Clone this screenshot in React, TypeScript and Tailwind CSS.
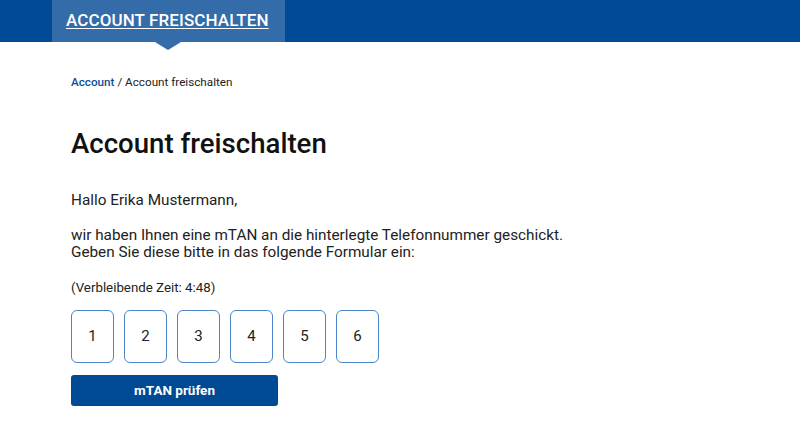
export default function App() {
  const digits = ["1", "2", "3", "4", "5", "6"];

  return (
    <div className="w-[800px] h-[447px] bg-white font-['Roboto',sans-serif] text-[#222] overflow-hidden">
      {/* Top bar with active tab */}
      <header className="h-[42px] bg-[#004a97] flex">
        <div className="relative ml-[52px] w-[233px] h-full bg-[#336ca9] flex items-center pl-[14px]">
          <a href="#" className="text-white text-[17px] font-medium underline underline-offset-2 tracking-[0.1px]">
            ACCOUNT FREISCHALTEN
          </a>
          <span className="absolute left-[103px] top-full w-0 h-0 border-l-[13px] border-r-[13px] border-t-[8px] border-l-transparent border-r-transparent border-t-[#336ca9]" />
        </div>
      </header>

      <main className="px-[71px]">
        <nav className="mt-[32px] text-[11.7px] leading-[16px]">
          <a href="#" className="text-[#0b4f9c] font-medium">Account</a>
          <span> / Account freischalten</span>
        </nav>

        <h1 className="mt-[38px] text-[27.6px] leading-[32px] font-medium text-[#111]">
          Account freischalten
        </h1>

        <p className="mt-[31px] text-[15.3px] leading-[18px]">Hallo Erika Mustermann,</p>

        <p className="mt-[18px] text-[15.3px] leading-[17px]">
          wir haben Ihnen eine mTAN an die hinterlegte Telefonnummer geschickt.
          <br />
          Geben Sie diese bitte in das folgende Formular ein:
        </p>

        <p className="mt-[19px] text-[13.3px] leading-[16px]">(Verbleibende Zeit: 4:48)</p>

        <div className="mt-[14px] flex gap-[10px]">
          {digits.map((d) => (
            <div
              key={d}
              className="w-[43px] h-[53px] rounded-[6px] border-[1.5px] border-[#4a86c8] flex items-center justify-center text-[15px] text-[#222]"
            >
              {d}
            </div>
          ))}
        </div>

        <button className="mt-[12px] w-[207px] h-[31px] rounded-[3px] bg-[#004a94] text-white text-[13.5px] font-bold">
          mTAN prüfen
        </button>
      </main>
    </div>
  );
}
